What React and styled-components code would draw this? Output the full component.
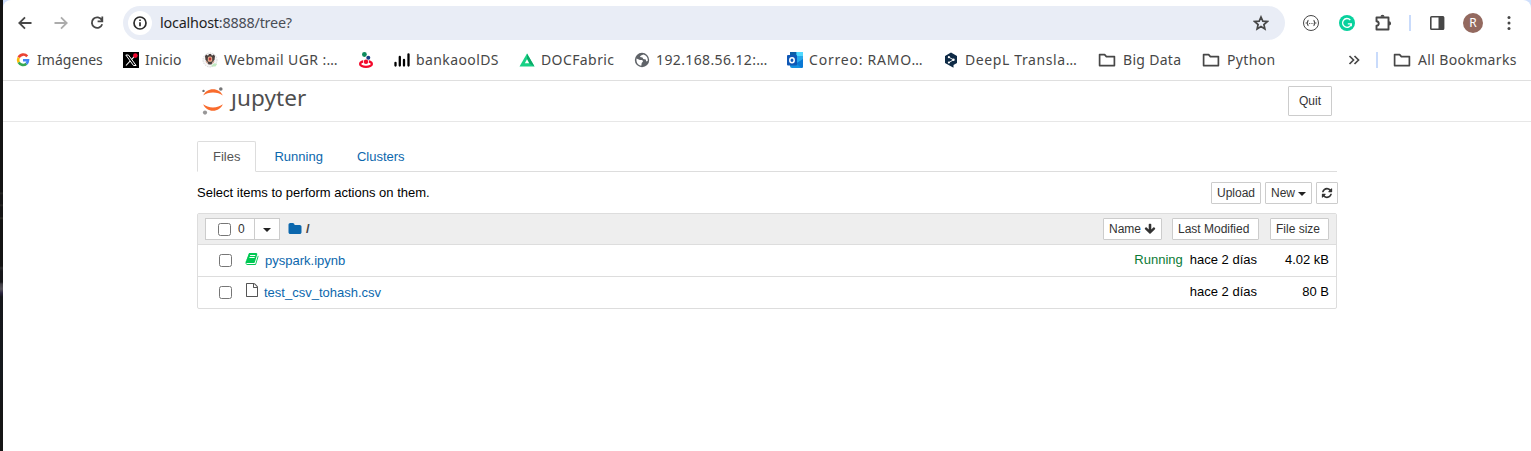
import React from "react";
import styled, { createGlobalStyle } from "styled-components";

const Global = createGlobalStyle`
  * { box-sizing: border-box; }
  html, body { margin: 0; background: #fff; }
  body { overflow: hidden; }
`;

const Screen = styled.div`
  display: flex;
  width: 1531px;
  height: 451px;
  background: #cfdffc;
`;

const DesktopEdge = styled.div`
  flex: none;
  width: 3px;
  background: linear-gradient(
    #141414 0, #141414 192px, #2a2a26 193px, #171717 195px, #171717 204px, #2c2b28 205px, #161616 207px,
    #161616 217px, #34332c 218px, #141414 220px, #141414 266px, #2d2d2f 268px, #17171a 271px, #17171a 282px,
    #3f3d44 284px, #55535a 289px, #2b2540 293px, #16171b 297px, #15191d 370px, #151515 420px, #151515 100%
  );
`;

const Browser = styled.div`
  flex: 1;
  min-width: 0;
  background: #fff;
  border-radius: 8px 8px 0 0;
  font-family: "Noto Sans", sans-serif;
  color: #474747;
`;

const Toolbar = styled.div`
  display: flex;
  align-items: center;
  height: 46px;
  padding: 0 12px;
`;

const NavButton = styled.div`
  display: flex;
  justify-content: center;
  width: 20px;
  margin-right: 16px;
  color: ${(p) => (p.$off ? "#acacac" : "#474747")};
`;

const Omnibox = styled.div`
  display: flex;
  align-items: center;
  width: 1162px;
  height: 34px;
  padding: 0 16px 0 5px;
  border-radius: 17px;
  background: #e9edf6;
`;

const SiteInfo = styled.div`
  display: flex;
  align-items: center;
  justify-content: center;
  width: 24px;
  height: 24px;
  border-radius: 50%;
  background: #fff;
  color: #2b2b2b;
`;

const Url = styled.div`
  flex: 1;
  margin-left: 8px;
  font-size: 14.4px;
  line-height: 20px;
  letter-spacing: -0.22px;
  color: #4a4e56;
  white-space: nowrap;
`;

const Host = styled.span`
  color: #1f1f1f;
`;

const Extension = styled.div`
  display: flex;
  justify-content: center;
  width: 20px;
  margin-left: 16px;
`;

const Divider = styled.div`
  flex: none;
  width: 2px;
  height: 16px;
  margin-left: ${(p) => p.$before}px;
  margin-right: ${(p) => p.$after || 0}px;
  background: #c9dbfb;
`;

const Avatar = styled.div`
  width: 20px;
  height: 20px;
  margin-left: 16px;
  border-radius: 50%;
  background: #93695f;
  color: #fff;
  font-size: 12px;
  line-height: 20px;
  text-align: center;
`;

const Bookmarks = styled.div`
  display: flex;
  align-items: center;
  height: 35px;
  padding: 0 0 7px 12px;
  border-bottom: 1px solid #dfdfdf;
`;

const Bookmark = styled.div`
  display: flex;
  flex: none;
  align-items: center;
  gap: ${(p) => (p.$folder ? 7 : 6)}px;
  margin-right: ${(p) => p.$after ?? 20}px;
  white-space: nowrap;
`;

const BookmarkLabel = styled.span`
  width: ${(p) => p.$width}px;
  font-size: 14px;
  line-height: 20px;
  letter-spacing: ${(p) => p.$track || 0}px;
`;

const JupyterHeader = styled.header`
  height: 41px;
  border-bottom: 1px solid #e7e7e7;
`;

const Container = styled.div`
  width: 1140px;
  margin-left: 194px;
  font-family: "Liberation Sans", Arial, sans-serif;
  font-size: 13px;
  line-height: 20px;
  color: #000;
`;

const HeaderRow = styled(Container)`
  display: flex;
  justify-content: space-between;
  height: 40px;
  padding: 5px 5px 0 5px;
`;

const Logo = styled.div`
  display: flex;
  align-items: flex-start;
  gap: 7px;
`;

const Wordmark = styled.span`
  margin-top: -2px;
  font-family: "Noto Sans", sans-serif;
  font-size: 22.5px;
  line-height: 28px;
  letter-spacing: 0.1px;
  color: #4e4e4e;
`;

const Button = styled.div`
  display: inline-flex;
  align-items: center;
  justify-content: ${(p) => (p.$start ? "flex-start" : "center")};
  gap: 3px;
  width: ${(p) => p.$width}px;
  height: ${(p) => p.$height || 22}px;
  margin-left: ${(p) => p.$before || 0}px;
  padding: ${(p) => (p.$start ? "0 0 0 5px" : "0")};
  border: 1px solid #ccc;
  border-radius: 1px;
  background: #fff;
  font-size: 12px;
  line-height: 18px;
  color: #333;
  white-space: nowrap;
`;

const Tabs = styled.div`
  display: flex;
  height: 31px;
  margin-top: 19px;
  border-bottom: 1px solid #ddd;
`;

const Tab = styled.div`
  height: 31px;
  margin-right: 2px;
  padding: 5px 15px;
  border: 1px solid ${(p) => (p.$active ? "#ddd" : "transparent")};
  border-bottom-color: ${(p) => (p.$active ? "#fff" : "transparent")};
  border-radius: 2px 2px 0 0;
  color: ${(p) => (p.$active ? "#555" : "#0b67ad")};
`;

const Actions = styled.div`
  display: flex;
  justify-content: space-between;
  width: 1141px;
  padding-top: 10px;
  height: 41px;
`;

const Hint = styled.span`
  padding-top: 1px;
`;

const ActionButtons = styled.div`
  display: flex;
  gap: 4px;
`;

const Caret = styled.span`
  width: 0;
  margin-top: 1px;
  border: 4px solid transparent;
  border-top-color: #222;
  border-bottom: 0;
`;

const List = styled.div`
  border: 1px solid #ddd;
  border-radius: 2px;
`;

const ListHeader = styled.div`
  display: flex;
  align-items: center;
  height: 30px;
  padding: 0 7px;
  background: #eee;
`;

const SelectGroup = styled.div`
  display: flex;
  height: 22px;
  border: 1px solid #ccc;
  background: #fff;
  font-size: 12px;
`;

const SelectAll = styled.div`
  display: flex;
  align-items: center;
  gap: 7px;
  width: 49px;
  padding-left: 12px;
  border-right: 1px solid #ccc;
  color: #333;
`;

const SelectMenu = styled.div`
  display: flex;
  align-items: center;
  justify-content: center;
  width: 24px;
`;

const Checkbox = styled.span`
  flex: none;
  width: 13px;
  height: 13px;
  border: 1px solid #767676;
  border-radius: 2.5px;
  background: #fff;
`;

const Crumb = styled.div`
  display: flex;
  flex: 1;
  align-items: center;
  gap: 4px;
  margin-left: 8px;
  color: #0b67ad;
`;

const Slash = styled.span`
  font-weight: bold;
  color: #444;
`;

const Row = styled.div`
  display: flex;
  align-items: center;
  height: 32px;
  padding: 0 7px 0 21px;
  border-top: 1px solid #ddd;
`;

const FileIcon = styled.span`
  display: flex;
  width: ${(p) => p.$width}px;
  margin-left: 13px;
  margin-top: ${(p) => p.$shift}px;
`;

const FileName = styled.span`
  flex: 1;
  color: #0b67ad;
`;

const Running = styled.span`
  margin-right: 7px;
  margin-top: -2px;
  color: #0b7a35;
`;

const Modified = styled.span`
  margin-top: -2px;
`;

const Size = styled.span`
  width: 72px;
  margin-top: -2px;
  text-align: right;
`;

const FA = {
  folder: "M1728 608v704q0 92-66 158t-158 66h-1216q-92 0-158-66t-66-158v-960q0-92 66-158t158-66h320q92 0 158 66t66 158v32h672q92 0 158 66t66 158z",
  refresh: "M1639 1056q0 5-1 7-64 268-268 434.5t-478 166.5q-146 0-282.5-55t-243.5-157l-129 129q-19 19-45 19t-45-19-19-45v-448q0-26 19-45t45-19h448q26 0 45 19t19 45-19 45l-137 137q71 66 161 102t187 36q134 0 250-65t186-179q11-17 53-117 8-23 30-23h192q13 0 22.5 9.5t9.5 22.5zm25-800v448q0 26-19 45t-45 19h-448q-26 0-45-19t-19-45 19-45l138-138q-148-137-349-137-134 0-250 65t-186 179q-11 17-53 117-8 23-30 23h-199q-13 0-22.5-9.5t-9.5-22.5v-7q65-268 270-434.5t480-166.5q146 0 284 55.5t245 156.5l130-129q19-19 45-19t45 19 19 45z",
  arrowDown: "M1675 832q0 53-37 90l-651 652q-39 37-91 37-53 0-90-37l-651-652q-38-36-38-90 0-53 38-91l74-75q39-37 91-37 53 0 90 37l294 294v-704q0-52 38-90t90-38h128q52 0 90 38t38 90v704l294-294q37-37 90-37 52 0 91 37l75 75q37 39 37 91z",
  file: "M1596 380q28 28 48 76t20 88v1152q0 40-28 68t-68 28h-1344q-40 0-68-28t-28-68v-1600q0-40 28-68t68-28h896q40 0 88 20t76 48zm-444-244v376h376q-10-29-22-41l-313-313q-12-12-41-22zm384 1528v-1024h-416q-40 0-68-28t-28-68v-416h-768v1536h1280z",
  book: "M1703 478q40 57 18 129l-275 906q-19 64-76.5 107.5t-122.5 43.5h-923q-77 0-148.5-53.5t-99.5-131.5q-24-67-2-127 0-4 3-27t4-37q1-8-3-21.5t-3-19.5q2-11 8-21t16.5-23.5 16.5-23.5q23-38 45-91.5t30-91.5q3-10 .5-30t-.5-28q3-11 17-28t17-23q21-36 42-92t25-90q1-9-2.5-32t.5-28q4-13 22-30.5t22-22.5q19-26 42.5-84.5t27.5-96.5q1-8-3-25.5t-2-26.5q2-8 9-18t18-23 17-21q8-12 16.5-30.5t15-35 16-36 19.5-32 26.5-23.5 36-11.5 47.5 5.5l-1 3q38-9 51-9h761q74 0 114 56t18 130l-274 906q-36 119-71.5 153.5t-128.5 34.5h-869q-27 0-38 15-11 16-1 43 24 70 144 70h923q29 0 56-15.5t35-41.5l300-987q7-22 5-57 38 15 59 43zm-1064 2q-4 13 2 22.5t20 9.5h608q13 0 25.5-9.5t16.5-22.5l21-64q4-13-2-22.5t-20-9.5h-608q-13 0-25.5 9.5t-16.5 22.5zm-83 256q-4 13 2 22.5t20 9.5h608q13 0 25.5-9.5t16.5-22.5l21-64q4-13-2-22.5t-20-9.5h-608q-13 0-25.5 9.5t-16.5 22.5z",
};

const Glyph = ({ name, size = 14, color = "currentColor" }) => (
  <svg width={size} height={size} viewBox="0 0 1792 1792" fill={color}>
    <path d={FA[name]} />
  </svg>
);

const Stroke = ({ size = 16, box = 16, width = 1.8, children }) => (
  <svg width={size} height={size} viewBox={`0 0 ${box} ${box}`} fill="none" stroke="currentColor" strokeWidth={width}>
    {children}
  </svg>
);

const FolderOutline = () => (
  <svg width="18" height="16" viewBox="0 0 18 16" fill="none" stroke="#474747" strokeWidth="1.7" strokeLinejoin="round">
    <path d="M1.6 2.6h5l1.800 2h8v9H1.600z" />
  </svg>
);

const GoogleIcon = () => (
  <svg width="16" height="16" viewBox="0 0 16 16" fill="none" strokeWidth="2.6">
    <path d="M12.200 4.400A5 5 0 0 0 3.700 5.600" stroke="#ea4335" />
    <path d="M3.700 5.600a5 5 0 0 0 0 4.800" stroke="#fbbc05" />
    <path d="M3.700 10.400a5 5 0 0 0 7.700 1.300" stroke="#34a853" />
    <path d="M11.400 11.700A5 5 0 0 0 13 8.200H8" stroke="#4285f4" />
  </svg>
);

const XIcon = () => (
  <svg width="16" height="16" viewBox="0 0 16 16">
    <rect width="16" height="16" fill="#000" />
    <path d="M12.300 3.300 3 13.500" stroke="#fff" strokeWidth="1.100" />
    <path d="M2.800 3h2.600l7.700 10.500h-2.600z" fill="#000" stroke="#fff" strokeWidth="1" />
    <circle cx="12.400" cy="3.600" r="2.300" fill="#f4082e" />
  </svg>
);

const CrestIcon = () => (
  <svg width="16" height="16" viewBox="0 0 16 16">
    <circle cx="8" cy="8" r="7" fill="#f5f5f5" stroke="#d8d8d8" strokeDasharray="1.500 1" />
    <path d="M3 4l1.400-1.500L6 3.700 7 2h2l1 1.700 1.600-1.200L13 4l-.5 4-1.700 1.500L9.500 12.500h-3L5.200 9.500 3.500 8z" fill="#4a403e" />
    <rect x="5.800" y="4.600" width="4.400" height="5.200" rx="1.500" fill="#eab58f" />
    <path d="M6.800 5.600h2.400v2.800H6.800z" fill="#b8343a" />
    <path d="M4 9l1.500 2.500M12 9l-1.500 2.500" stroke="#c98f78" />
    <path d="M8.500 14.500l3.500-3.200 3.200.6-1.700 2.600z" fill="#bfe9c0" />
  </svg>
);

const TargetIcon = () => (
  <svg width="16" height="16" viewBox="0 0 16 16">
    <ellipse cx="8" cy="11.900" rx="5.900" ry="2.900" fill="none" stroke="#f3092b" strokeWidth="2.300" />
    <circle cx="8" cy="9.200" r="2.900" fill="#fff" />
    <circle cx="8" cy="9.700" r="2.200" fill="#f3092b" />
    <circle cx="6.400" cy="2.500" r="2.400" fill="#0d8a5c" />
    <circle cx="10.300" cy="5.800" r="2" fill="#1a3f86" />
  </svg>
);

const BarsIcon = () => (
  <svg width="16" height="16" viewBox="0 0 16 16" stroke="#000" strokeWidth="2.300" strokeLinecap="round">
    <path d="M1.500 10.800v2.700M5.800 5v8.500M10 8v5.500M14.500 2.300v11.200" />
  </svg>
);

const DocFabricIcon = () => (
  <svg width="16" height="16" viewBox="0 0 16 16">
    <path d="M8 1.500 15.500 14.500H.5z" fill="#17d185" />
    <path d="M8 1.500 15.500 14.500 10.500 11.500 8 6.500z" fill="#0ba967" />
    <path d="M8 7.200l2.200 4H5.800z" fill="#fff" />
  </svg>
);

const GlobeIcon = () => (
  <svg width="16" height="16" viewBox="0 0 16 16">
    <circle cx="8" cy="8" r="7.200" fill="#5f6368" />
    <path d="M2.500 6.600 6 8h2.300l.7 1.600-1.300 1.500-.4 2.600C4.500 13.700 2 11 2.500 6.600zM9.500 2.400C7.500 3 6 3.600 6 5l2.500.6.8 1.400 2.500.6.5 1.800 1.400-.4C14.200 6.300 12.600 3.200 9.500 2.400z" fill="#fff" />
  </svg>
);

const OutlookIcon = () => (
  <svg width="16" height="16" viewBox="0 0 16 16">
    <rect x="3" width="13" height="14" fill="#28a8ea" />
    <path d="M3 0h6.500v4H3z" fill="#0a5ca8" />
    <path d="M9.500 0H16v4H9.500z" fill="#50d9ff" />
    <path d="M3 8l13 8H5q-2 0-2-2z" fill="#1490df" />
    <path d="M16 7v7.500q0 1.500-1.500 1.500L9 11.500z" fill="#0a78d4" />
    <rect y="3" width="10" height="10.500" rx="1" fill="#0f57b5" />
    <ellipse cx="5" cy="8.200" rx="2.200" ry="2.500" fill="none" stroke="#fff" strokeWidth="1.500" />
  </svg>
);

const DeepLIcon = () => (
  <svg width="16" height="16" viewBox="0 0 16 16">
    <path d="M8 .5l6 3.400v7.200L10.500 13v2.800L2 11.100V3.900z" fill="#0f2b46" />
    <path d="M5.800 5.200 10.500 7.800l-4.700 2.800" fill="none" stroke="#fff" strokeWidth=".9" />
    <circle cx="5.900" cy="5.200" r="1.100" fill="#fff" />
    <circle cx="10.500" cy="7.800" r="1.200" fill="#fff" />
    <circle cx="5.900" cy="10.500" r="1.100" fill="#fff" />
  </svg>
);

const JupyterMark = () => (
  <svg width="22" height="29" viewBox="0 0 22 29">
    <path d="M1.200 9.600C2.800 5.700 6.600 3.300 11 3.300s8.200 2.400 9.800 6.300C18.300 7.600 14.900 6.500 11 6.500S3.700 7.600 1.200 9.600z" fill="#f96b2c" />
    <path d="M1.200 18.200c1.600 3.900 5.400 6.500 9.800 6.500s8.200-2.600 9.800-6.500c-2.500 2-5.900 3.200-9.800 3.200s-7.300-1.200-9.800-3.200z" fill="#f96b2c" />
    <circle cx="18.800" cy="3" r="1.800" fill="#767677" />
    <circle cx="1.500" cy="4.900" r="1.200" fill="#6e6e6f" />
    <circle cx="3" cy="26.600" r="2.100" fill="#989798" />
  </svg>
);

const bookmarks = [
  { label: "Imágenes", width: 66, track: 0.05, icon: <GoogleIcon /> },
  { label: "Inicio", width: 37, track: 0.15, icon: <XIcon /> },
  { label: "Webmail UGR :…", width: 114, track: 0.38, icon: <CrestIcon /> },
  { icon: <TargetIcon /> },
  { label: "bankaoolDS", width: 83, track: 0.4, icon: <BarsIcon /> },
  { label: "DOCFabric", width: 73, track: 0.4, icon: <DocFabricIcon /> },
  { label: "192.168.56.12:…", width: 111, track: 0.37, icon: <GlobeIcon /> },
  { label: "Correo: RAMO…", width: 114, track: 0.78, icon: <OutlookIcon /> },
  { label: "DeepL Transla…", width: 113, track: 0.6, icon: <DeepLIcon /> },
  { label: "Big Data", width: 59, track: 0.3, folder: true, icon: <FolderOutline /> },
  { label: "Python", width: 48, track: 0.35, folder: true, icon: <FolderOutline />, after: 73 },
];

const files = [
  { name: "pyspark.ipynb", icon: "book", color: "#00c853", width: 20, shift: -3, running: true, size: "4.02 kB" },
  { name: "test_csv_tohash.csv", icon: "file", color: "#555", width: 19, shift: -5, size: "80 B" },
];

export default function App() {
  return (
    <>
      <Global />
      <Screen>
        <DesktopEdge />
        <Browser>
          <Toolbar>
            <NavButton>
              <Stroke><path d="M14.500 8H2.500M8 2.300 2.300 8 8 13.700" /></Stroke>
            </NavButton>
            <NavButton $off>
              <Stroke><path d="M1.500 8h12M8 2.300 13.700 8 8 13.700" /></Stroke>
            </NavButton>
            <NavButton>
              <Stroke><path d="M12.800 5A5.300 5.300 0 1 0 13.200 9.300M13.300 1.600v4.700H8.600" /></Stroke>
            </NavButton>
            <Omnibox>
              <SiteInfo>
                <Stroke width={1.7}>
                  <circle cx="8" cy="8" r="6" />
                  <path d="M8 7.300v4M8 4.500v1.600" />
                </Stroke>
              </SiteInfo>
              <Url><Host>localhost</Host>:8888/tree?</Url>
              <Stroke width={1.7}>
                <path d="M8 2l1.800 4.100 4.500.4-3.400 3 1 4.400L8 11.600l-3.900 2.300 1-4.400-3.400-3 4.500-.4z" />
              </Stroke>
            </Omnibox>
            <Extension>
              <Stroke width={1}>
                <circle cx="8" cy="8" r="7.500" />
                <path d="M5.500 5.400c-1.300 0-.4 2.200-1.700 2.600 1.300.4.400 2.600 1.700 2.600M10.500 5.400c1.300 0 .4 2.200 1.700 2.600-1.300.4-.4 2.600-1.700 2.600" strokeWidth="1.200" />
                <path d="M6 8.500h4.500" strokeDasharray="1 .7" strokeWidth=".8" />
              </Stroke>
            </Extension>
            <Extension>
              <svg width="16" height="16" viewBox="0 0 16 16">
                <circle cx="8" cy="8" r="8" fill="#07d19d" />
                <path d="M11.300 5A4.400 4.400 0 1 0 12.300 8.800H8.800M12.300 8.800v2.500" fill="none" stroke="#fff" strokeWidth="1.300" />
              </svg>
            </Extension>
            <Extension>
              <Stroke size={18} box={18} width={1.9}>
                <path d="M2.500 7.200V3.500h12v12h-12v-3.700c3-.4 3-4.200 0-4.600z" strokeLinejoin="round" />
                <path d="M6.500 2.800a2 2 0 0 1 4 0zM15 7.300a2 2 0 0 1 0 4.200z" fill="currentColor" stroke="none" />
              </Stroke>
            </Extension>
            <Divider $before={16} />
            <Extension>
              <svg width="16" height="16" viewBox="0 0 16 16">
                <rect x="1.800" y="1.800" width="12.800" height="12.400" rx=".8" fill="none" stroke="#474747" strokeWidth="1.600" />
                <path d="M9.500 1.500h5v13h-5z" fill="#474747" />
              </svg>
            </Extension>
            <Avatar>R</Avatar>
            <Extension>
              <svg width="4" height="16" viewBox="0 0 4 16" fill="#474747">
                <circle cx="2" cy="2.500" r="1.500" />
                <circle cx="2" cy="8" r="1.500" />
                <circle cx="2" cy="13.500" r="1.500" />
              </svg>
            </Extension>
          </Toolbar>
          <Bookmarks>
            {bookmarks.map((b, i) => (
              <Bookmark key={i} $after={b.after} $folder={b.folder}>
                {b.icon}
                {b.label && <BookmarkLabel $width={b.width} $track={b.track}>{b.label}</BookmarkLabel>}
              </Bookmark>
            ))}
            <svg width="12" height="10" viewBox="0 0 12 10" fill="none" stroke="#474747" strokeWidth="1.700">
              <path d="M1.500 1l4 4-4 4M6.500 1l4 4-4 4" />
            </svg>
            <Divider $before={16} $after={15} />
            <Bookmark $after={0} $folder>
              <FolderOutline />
              <BookmarkLabel $width={99} $track={0.35}>All Bookmarks</BookmarkLabel>
            </Bookmark>
          </Bookmarks>

          <JupyterHeader>
            <HeaderRow>
              <Logo>
                <JupyterMark />
                <Wordmark>ȷupyter</Wordmark>
              </Logo>
              <Button $width={44} $height={30}>Quit</Button>
            </HeaderRow>
          </JupyterHeader>

          <Container>
            <Tabs>
              <Tab $active>Files</Tab>
              <Tab>Running</Tab>
              <Tab>Clusters</Tab>
            </Tabs>
            <Actions>
              <Hint>Select items to perform actions on them.</Hint>
              <ActionButtons>
                <Button $width={50}>Upload</Button>
                <Button $width={47}>New <Caret /></Button>
                <Button $width={22}><Glyph name="refresh" size={12} /></Button>
              </ActionButtons>
            </Actions>
            <List>
              <ListHeader>
                <SelectGroup>
                  <SelectAll><Checkbox />0</SelectAll>
                  <SelectMenu><Caret /></SelectMenu>
                </SelectGroup>
                <Crumb><Glyph name="folder" /><Slash>/</Slash></Crumb>
                <Button $width={59} $start>Name <Glyph name="arrowDown" size={12} /></Button>
                <Button $width={87} $before={10} $start>Last Modified</Button>
                <Button $width={59} $before={11} $start>File size</Button>
              </ListHeader>
              {files.map((f) => (
                <Row key={f.name}>
                  <Checkbox />
                  <FileIcon $width={f.width} $shift={f.shift}><Glyph name={f.icon} color={f.color} /></FileIcon>
                  <FileName>{f.name}</FileName>
                  {f.running && <Running>Running</Running>}
                  <Modified>hace 2 días</Modified>
                  <Size>{f.size}</Size>
                </Row>
              ))}
            </List>
          </Container>
        </Browser>
      </Screen>
    </>
  );
}
